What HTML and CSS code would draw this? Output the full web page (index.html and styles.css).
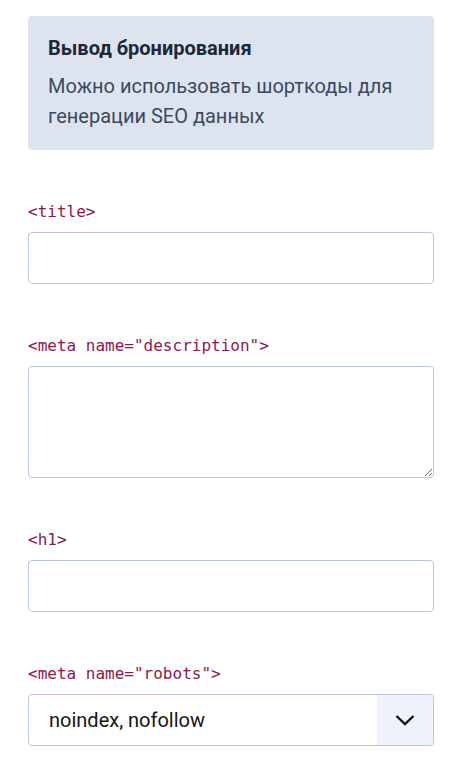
FILE: index.html
```html
<!DOCTYPE html>
<html lang="ru">
<head>
<meta charset="utf-8">
<link rel="stylesheet" href="styles.css">
</head>
<body>
<div class="page">
  <div class="notice">
    <div class="notice-title">Вывод бронирования</div>
    <div class="notice-text">Можно использовать шорткоды для генерации SEO данных</div>
  </div>
  <div class="field">
    <label class="label">&lt;title&gt;</label>
    <input class="input" type="text">
  </div>
  <div class="field">
    <label class="label">&lt;meta name="description"&gt;</label>
    <textarea class="textarea"></textarea>
  </div>
  <div class="field">
    <label class="label">&lt;h1&gt;</label>
    <input class="input" type="text">
  </div>
  <div class="field">
    <label class="label">&lt;meta name="robots"&gt;</label>
    <div class="select">
      <span class="select-value">noindex, nofollow</span>
      <span class="select-btn">
        <svg width="20" height="12" viewBox="0 0 20 12"><path d="M1.5 2 L10 10 L18.5 2" fill="none" stroke="#111" stroke-width="2.4"/></svg>
      </span>
    </div>
  </div>
</div>
</body>
</html>
```
FILE: styles.css
```css
html, body { margin: 0; padding: 0; background: #fff; }
body { font-family: Roboto, "Noto Sans", sans-serif; }
.page { padding: 16px 29px 0 28px; display: flex; flex-direction: column; gap: 52px; }
.notice { background: #dde4f0; border-radius: 4px; padding: 19px 20px 0 20px; height: 134px; box-sizing: border-box; }
.notice-title { font-size: 20px; font-weight: 700; color: #1d2838; line-height: 26px; margin-bottom: 10px; }
.notice-text { font-size: 20px; line-height: 30px; color: #3b4a5f; }
.field { display: flex; flex-direction: column; gap: 10px; }
.label { font-family: "DejaVu Sans Mono", monospace; font-size: 16px; line-height: 20px; color: #8b1a4b; }
.input { box-sizing: border-box; height: 52px; width: 100%; border: 1px solid #b9c7dc; border-radius: 4px; margin: 0; padding: 0 20px; font-size: 20px; outline: none; }
.textarea { box-sizing: border-box; height: 112px; width: 100%; border: 1px solid #b9c7dc; border-radius: 4px; margin: 0; padding: 12px 20px; display: block; font-size: 20px; outline: none; resize: vertical; }
.select { box-sizing: border-box; height: 52px; display: flex; border: 1px solid #b9c7dc; border-radius: 4px; overflow: hidden; }
.select-value { flex: 1; display: flex; align-items: center; padding-left: 20px; font-size: 20px; color: #151515; }
.select-btn { width: 56px; background: #eef3fb; display: flex; align-items: center; justify-content: center; }
```
